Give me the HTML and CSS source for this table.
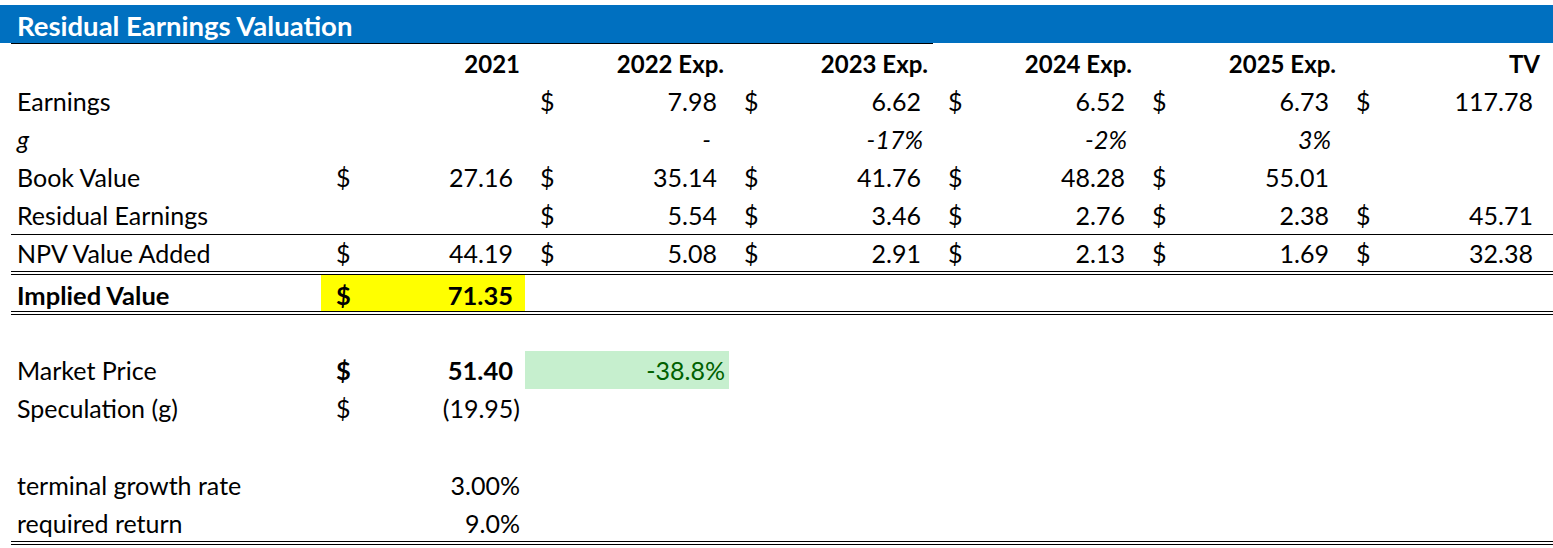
FILE: index.html
```html
<!DOCTYPE html>
<html>
<head>
<meta charset="utf-8">
<link rel="stylesheet" href="styles.css">
</head>
<body>
<div class="sheet">
  <div class="title"><div class="title-text">Residual Earnings Valuation</div></div>
  <div class="title-rule"></div>

  <div class="row head">
    <div class="c lab"></div>
    <div class="c hd">2021</div>
    <div class="c hd">2022 Exp.</div>
    <div class="c hd">2023 Exp.</div>
    <div class="c hd">2024 Exp.</div>
    <div class="c hd">2025 Exp.</div>
    <div class="c hd">TV</div>
  </div>

  <div class="row">
    <div class="c lab">Earnings</div>
    <div class="c"></div>
    <div class="c acc"><span>$</span><span>7.98</span></div>
    <div class="c acc"><span>$</span><span>6.62</span></div>
    <div class="c acc"><span>$</span><span>6.52</span></div>
    <div class="c acc"><span>$</span><span>6.73</span></div>
    <div class="c acc"><span>$</span><span>117.78</span></div>
  </div>

  <div class="row it">
    <div class="c lab">g</div>
    <div class="c"></div>
    <div class="c dash">-</div>
    <div class="c pct">-17%</div>
    <div class="c pct">-2%</div>
    <div class="c pct">3%</div>
    <div class="c"></div>
  </div>

  <div class="row">
    <div class="c lab">Book Value</div>
    <div class="c acc"><span>$</span><span>27.16</span></div>
    <div class="c acc"><span>$</span><span>35.14</span></div>
    <div class="c acc"><span>$</span><span>41.76</span></div>
    <div class="c acc"><span>$</span><span>48.28</span></div>
    <div class="c acc"><span>$</span><span>55.01</span></div>
    <div class="c"></div>
  </div>

  <div class="row rule">
    <div class="c lab">Residual Earnings</div>
    <div class="c"></div>
    <div class="c acc"><span>$</span><span>5.54</span></div>
    <div class="c acc"><span>$</span><span>3.46</span></div>
    <div class="c acc"><span>$</span><span>2.76</span></div>
    <div class="c acc"><span>$</span><span>2.38</span></div>
    <div class="c acc"><span>$</span><span>45.71</span></div>
  </div>

  <div class="row npv">
    <div class="c lab">NPV Value Added</div>
    <div class="c acc"><span>$</span><span>44.19</span></div>
    <div class="c acc"><span>$</span><span>5.08</span></div>
    <div class="c acc"><span>$</span><span>2.91</span></div>
    <div class="c acc"><span>$</span><span>2.13</span></div>
    <div class="c acc"><span>$</span><span>1.69</span></div>
    <div class="c acc"><span>$</span><span>32.38</span></div>
  </div>

  <div class="row implied">
    <div class="c lab bold">Implied Value</div>
    <div class="c acc bold yellow"><span>$</span><span>71.35</span></div>
  </div>

  <div class="row blank1"></div>

  <div class="row market">
    <div class="c lab">Market Price</div>
    <div class="c acc bold"><span>$</span><span>51.40</span></div>
    <div class="c good">-38.8%</div>
  </div>

  <div class="row">
    <div class="c lab">Speculation (g)</div>
    <div class="c acc neg"><span>$</span><span>(19.95)</span></div>
  </div>

  <div class="row blank2"></div>

  <div class="row">
    <div class="c lab">terminal growth rate</div>
    <div class="c num">3.00%</div>
  </div>

  <div class="row last">
    <div class="c lab">required return</div>
    <div class="c num">9.0%</div>
  </div>
</div>
</body>
</html>
```

FILE: styles.css
```css
* { box-sizing: border-box; }

body {
  margin: 0;
  background: #ffffff;
  font-family: Lato, "Open Sans", sans-serif;
  font-size: 25px;
  color: #000000;
}

.sheet {
  padding-top: 5px;
  width: 1553px;
}

.title {
  height: 38px;
  background: #0070c0;
  padding-left: 17px;
  padding-top: 3px;
  display: flex;
  align-items: center;
}

.title-text {
  color: #ffffff;
  font-weight: bold;
  font-size: 27.5px;
}

.title-rule {
  margin-left: 11px;
  width: 922px;
  height: 1px;
  background: #000000;
}

.row {
  display: grid;
  grid-template-columns: 310px repeat(6, 204px) 1fr;
  margin-left: 11px;
  height: 38px;
}

.c {
  display: flex;
  align-items: center;
  white-space: nowrap;
}

.lab { padding-left: 6px; }

.hd {
  justify-content: flex-end;
  padding-right: 5px;
  font-weight: bold;
  font-size: 24px;
  padding-top: 0;
}

.head { height: 38px; }

.acc {
  justify-content: space-between;
  padding-left: 15px;
  padding-right: 12px;
}

.neg { padding-right: 5px; }

.num {
  justify-content: flex-end;
  padding-right: 5px;
}

.it .c { font-style: italic; }

.pct {
  justify-content: flex-end;
  padding-right: 10px;
}

.dash {
  justify-content: flex-end;
  padding-right: 18px;
}

.bold {
  font-weight: bold;
  font-size: 25.5px;
}

.rule {
  height: 39px;
  border-bottom: 1px solid #000000;
}

.npv {
  height: 40px;
  border-bottom: 4px double #000000;
}

.implied {
  height: 40px;
  border-bottom: 4px double #000000;
}

.implied .c {
  height: 36px;
  padding-top: 4px;
}

.yellow { background: #ffff00; }

.blank1 { height: 35px; }

.market { height: 39px; }

.good {
  background: #c6efce;
  color: #006100;
  justify-content: flex-end;
  padding-right: 4px;
  margin-top: 1px;
}

.blank2 { height: 39px; }

.last {
  height: 41px;
  border-bottom: 4px double #000000;
}
```
